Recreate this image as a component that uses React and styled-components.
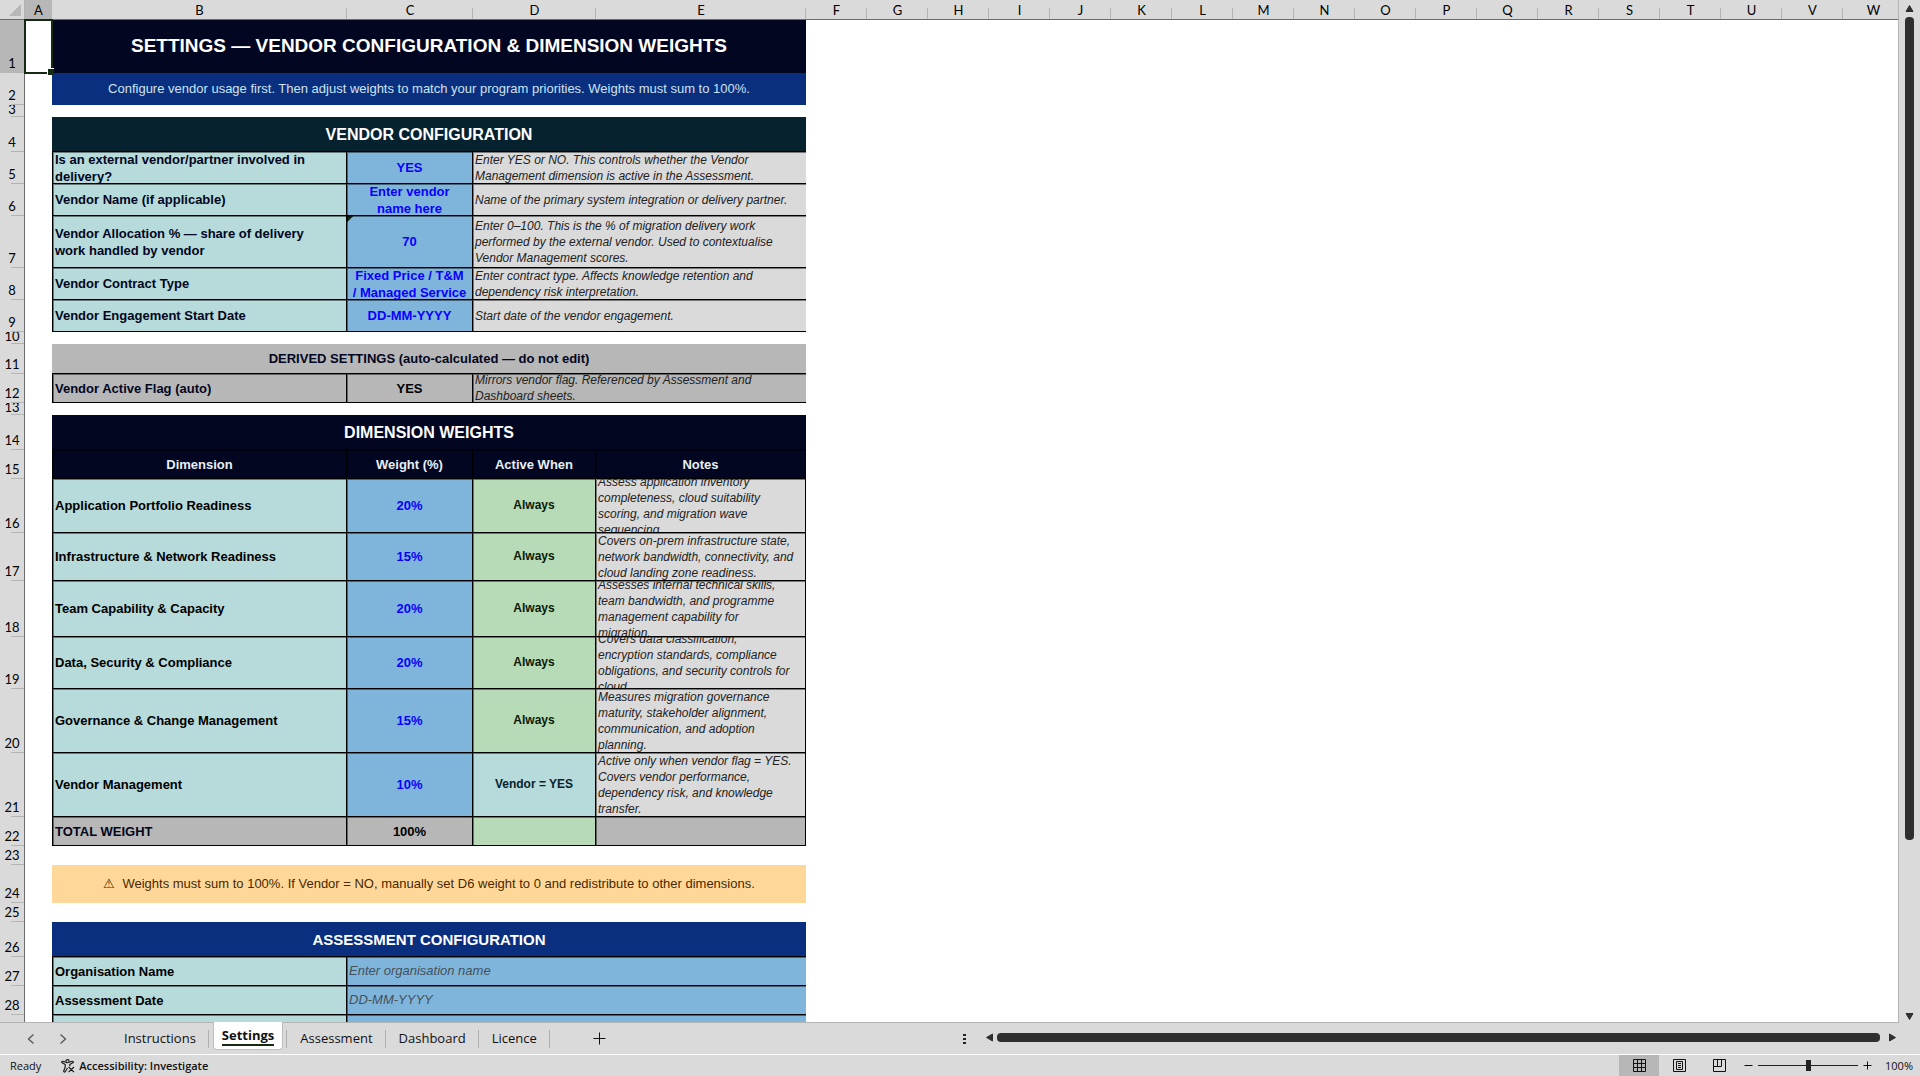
import React, { useState } from "react";
import styled, { createGlobalStyle, css } from "styled-components";

const GlobalStyle = createGlobalStyle`
  * { box-sizing: border-box; }
  html, body, #root { height: 100%; margin: 0; }
  body { overflow: hidden; background: #dadada; }
  button { border: 0; padding: 0; background: none; color: inherit; font: inherit; cursor: pointer; }
`;

const color = {
  chrome: "#dadada",
  chromeActive: "#b7b7b7",
  tick: "#b4b4b4",
  rule: "#6c6c6c",
  navy: "#020621",
  blue: "#092f7e",
  teal: "#06222f",
  mint: "#b7dada",
  input: "#7fb5da",
  note: "#dadada",
  gray: "#b7b7b7",
  green: "#b7dab7",
  amber: "#ffd899",
  select: "#142b12",
};

const sheetFont = `"Liberation Sans", Arial, sans-serif`;
const headingFont = `Lato, "Open Sans", sans-serif`;
const chromeFont = `"Open Sans", "Noto Sans", sans-serif`;

/* ---------- page frame ---------- */

const Page = styled.div`
  display: flex;
  flex-direction: column;
  height: 100vh;
  background: ${color.chrome};
`;

const Workspace = styled.main`
  display: flex;
  flex: 1;
  min-height: 0;
`;

const SheetPane = styled.div`
  flex: 1;
  min-width: 0;
  overflow: hidden;
  background: #fff;
  border-right: 1px solid ${color.tick};
  border-bottom: 1px solid ${color.tick};
`;

/* ---------- grid ---------- */

const Grid = styled.table`
  table-layout: fixed;
  width: 1904px;
  border-collapse: separate;
  border-spacing: 0;
  font-family: ${sheetFont};
  td, th { padding: 0; }
`;

const Col = styled.col`
  width: ${(p) => p.$w}px;
`;

const ColumnHead = styled.th`
  height: 20px;
  font: 400 13px/16px ${headingFont};
  color: #000;
  vertical-align: middle;
  border-bottom: 1px solid ${color.rule};
  background: ${(p) =>
    p.$active
      ? color.chromeActive
      : `linear-gradient(${color.tick}, ${color.tick}) right bottom / 1px 11px no-repeat ${color.chrome}`};
`;

const CornerHead = styled.th`
  height: 20px;
  text-align: right;
  vertical-align: top;
  border-right: 1px solid ${color.tick};
  border-bottom: 1px solid ${color.rule};
  background: ${color.chrome};
  svg { display: block; margin: 4px 3px 0 auto; }
`;

const RowHead = styled.div`
  display: flex;
  align-items: flex-end;
  justify-content: center;
  height: ${(p) => p.$h}px;
  padding-bottom: ${(p) => (p.$h < 16 ? 3 : 5)}px;
  overflow: hidden;
  font: 400 13px/9px ${headingFont};
  color: #000;
  border-right: 1px solid ${color.rule};
  background: ${(p) =>
    `linear-gradient(${color.tick}, ${color.tick}) right bottom / 13px 1px no-repeat ${
      p.$active ? color.chromeActive : color.chrome
    }`};
`;

const Blank = styled.div`
  position: relative;
  height: ${(p) => p.$h}px;
`;

const Selection = styled.div`
  position: absolute;
  z-index: 2;
  inset: -1px;
  border: 2px solid ${color.select};
  &::after {
    content: "";
    position: absolute;
    right: -3px;
    bottom: -3px;
    width: 6px;
    height: 6px;
    background: ${color.select};
    border: solid #fff;
    border-width: 1px 0 0 1px;
  }
`;

const line = "1px solid #000";
const softEdge = "inset 1px 1px 0 rgba(0, 0, 0, 0.45)";

const Box = styled.div`
  display: flex;
  align-items: center;
  height: ${(p) => p.$h}px;
  overflow: hidden;
  padding: 0 2px;
  font-size: 13px;
  line-height: 17px;
  white-space: pre-line;
`;

const Banner = styled(Box)`
  justify-content: center;
  padding-bottom: ${(p) => (p.$ruled ? 0 : 2)}px;
  white-space: pre;
  font-weight: ${(p) => (p.$plain ? 400 : 700)};
  font-size: ${(p) => p.$size || 13}px;
  color: ${(p) => p.$fg || "#fff"};
  background: ${(p) => p.$bg};
  border-bottom: ${(p) => (p.$ruled ? line : "0")};
`;

const Label = styled(Box)`
  font-weight: 700;
  color: ${(p) => p.$fg || "#000"};
  background: ${(p) => p.$bg || color.mint};
  border: ${line};
  border-top: 0;
  box-shadow: ${softEdge};
`;

const Value = styled(Box)`
  justify-content: center;
  text-align: center;
  font-weight: 700;
  color: ${(p) => p.$fg || "#0a00ff"};
  border: ${line};
  border-width: 0 1px 1px 0;
  box-shadow: ${softEdge};
  background: ${(p) => p.$bg || color.input};
  ${(p) =>
    p.$flagged &&
    css`
      background: linear-gradient(135deg, #10240f 4px, transparent 5px) ${color.input};
    `}
`;

const State = styled(Value)`
  font-size: 12px;
`;

const Note = styled(Box)`
  font-size: 12px;
  font-style: italic;
  line-height: 16px;
  color: #222;
  background: ${(p) => p.$bg || color.note};
  border: ${line};
  border-width: 0 ${(p) => (p.$open ? 0 : 1)}px 1px 0;
  box-shadow: ${softEdge};
`;

const Entry = styled(Note)`
  font-size: 13px;
  color: #44505a;
  background: ${color.input};
`;

const HeadCell = styled(Value)`
  color: #e8eef4;
  background: ${color.navy};
  border-left: ${(p) => (p.$first ? line : "0")};
`;

/* ---------- scroll bars ---------- */

const VScroll = styled.div`
  display: flex;
  flex-direction: column;
  align-items: center;
  width: 21px;
  padding: 4px 0 2px;
  gap: 4px;
`;

const Arrow = styled.button`
  display: flex;
  flex: none;
  align-items: center;
  justify-content: center;
  width: 9px;
  height: 9px;
`;

const VTrack = styled.div`
  flex: 1;
  width: 9px;
`;

const VThumb = styled.div`
  height: 83%;
  border-radius: 4px;
  background: #2f2f2f;
`;

const HScroll = styled.div`
  display: flex;
  align-items: center;
  width: 50%;
  padding: 0 23px 2px 3px;
`;

const Grip = styled.button`
  width: 3px;
  height: 10px;
  margin: 2px 19px 0 0;
  svg { display: block; }
`;

const HThumb = styled.div`
  flex: 1;
  height: 9px;
  margin: 0 8px 0 3px;
  border-radius: 4px;
  background: #2f2f2f;
`;

/* ---------- sheet tabs ---------- */

const TabBar = styled.div`
  display: flex;
  height: 32px;
  border-bottom: 1px solid #fff;
`;

const TabSide = styled.div`
  display: flex;
  align-items: center;
  width: 50%;
`;

const TabNav = styled.div`
  display: flex;
  padding: 0 32px 0 15px;
`;

const IconButton = styled.button`
  display: flex;
  align-items: center;
  justify-content: center;
  width: 32px;
  height: 30px;
`;

const TabList = styled.div`
  display: flex;
  align-self: stretch;
`;

const TabSlot = styled.div`
  display: flex;
  align-items: flex-start;
  padding: 0 ${(p) => (p.$on ? 4 : 0)}px;
  background: linear-gradient(#b0b0b0, #b0b0b0) right 7px / 1px 18px no-repeat;
`;

const Tab = styled.button`
  height: 31px;
  padding: 0 13px;
  font: 400 13px/31px ${chromeFont};
  color: #111;
  ${(p) =>
    p.$on &&
    css`
      height: 28px;
      margin-top: -1px;
      padding: 0 8px;
      font-weight: 700;
      line-height: 18px;
      background: #fff;
      border: 1px solid #bdbdbd;
      border-top: 0;
      border-radius: 0 0 4px 4px;
      span {
        display: block;
        border-bottom: 2px solid ${color.select};
      }
    `}
`;

const AddTab = styled(IconButton)`
  margin-left: 34px;
`;

/* ---------- status bar ---------- */

const StatusBar = styled.footer`
  display: flex;
  align-items: center;
  justify-content: space-between;
  height: 21px;
  font: 400 11px/20px ${chromeFont};
  color: #111;
`;

const StatusGroup = styled.div`
  display: flex;
  align-items: center;
  height: 21px;
`;

const Ready = styled.span`
  padding: 0 20px 0 10px;
`;

const Access = styled.button`
  display: flex;
  align-items: center;
  gap: 4px;
  font-weight: 600;
`;

const ViewButton = styled.button`
  display: flex;
  align-items: center;
  justify-content: center;
  width: 40px;
  height: 21px;
  padding-bottom: 1px;
  background: ${(p) => (p.$on ? color.chromeActive : "transparent")};
`;

const ZoomStep = styled.button`
  display: flex;
  width: 9px;
  margin: 0 5px;
`;

const ZoomRange = styled.input`
  appearance: none;
  width: 100px;
  height: 11px;
  margin: 0;
  background: linear-gradient(#222, #222) center / 100% 1px no-repeat;
  &::-webkit-slider-thumb {
    appearance: none;
    width: 5px;
    height: 11px;
    background: #222;
  }
`;

const ZoomValue = styled.span`
  width: 35px;
  margin-left: 8px;
`;

/* ---------- data ---------- */

const widths = [25, 27, 295, 126, 123, 210, ...Array(18).fill(61)];
const letters = "ABCDEFGHIJKLMNOPQRSTUVW".split("");

const banner = (h, text, props) => ({ h, kind: "banner", text, props });
const gap = (h) => ({ h, kind: "gap" });
const vendor = (h, label, value, note, props = {}) => ({ h, kind: "vendor", label, value, note, ...props });
const weight = (h, label, value, state, note, props = {}) => ({ h, kind: "weight", label, value, state, note, ...props });
const entry = (h, label, value) => ({ h, kind: "entry", label, value });

const rows = [
  banner(53, "SETTINGS — VENDOR CONFIGURATION & DIMENSION WEIGHTS", { $bg: color.navy, $size: 19 }),
  banner(32, "Configure vendor usage first. Then adjust weights to match your program priorities. Weights must sum to 100%.", {
    $bg: color.blue, $fg: "#cfe3f2", $plain: true,
  }),
  gap(12),
  banner(35, "VENDOR CONFIGURATION", { $bg: color.teal, $size: 16, $ruled: true }),
  vendor(32, "Is an external vendor/partner involved in delivery?", "YES", "Enter YES or NO. This controls whether the Vendor Management dimension is active in the Assessment."),
  vendor(32, "Vendor Name (if applicable)", "Enter vendor\nname here", "Name of the primary system integration or delivery partner."),
  vendor(52, "Vendor Allocation % — share of delivery\nwork handled by vendor", "70", "Enter 0–100. This is the % of migration delivery work performed by the external vendor. Used to contextualise Vendor Management scores.", { flagged: true }),
  vendor(32, "Vendor Contract Type", "Fixed Price / T&M\n/ Managed Service", "Enter contract type. Affects knowledge retention and dependency risk interpretation."),
  vendor(32, "Vendor Engagement Start Date", "DD-MM-YYYY", "Start date of the vendor engagement."),
  gap(12),
  banner(30, "DERIVED SETTINGS (auto-calculated — do not edit)", { $bg: color.gray, $fg: color.navy, $ruled: true }),
  vendor(29, "Vendor Active Flag (auto)", "YES", "Mirrors vendor flag. Referenced by Assessment and Dashboard sheets.", { bg: color.gray, fg: "#000" }),
  gap(12),
  banner(35, "DIMENSION WEIGHTS", { $bg: color.navy, $size: 16, $ruled: true }),
  { h: 29, kind: "head", cells: ["Dimension", "Weight (%)", "Active When", "Notes"] },
  weight(54, "Application Portfolio Readiness", "20%", "Always", "Assess application inventory\ncompleteness, cloud suitability\nscoring, and migration wave\nsequencing."),
  weight(48, "Infrastructure & Network Readiness", "15%", "Always", "Covers on-prem infrastructure state,\nnetwork bandwidth, connectivity, and\ncloud landing zone readiness."),
  weight(56, "Team Capability & Capacity", "20%", "Always", "Assesses internal technical skills,\nteam bandwidth, and programme\nmanagement capability for\nmigration."),
  weight(52, "Data, Security & Compliance", "20%", "Always", "Covers data classification,\nencryption standards, compliance\nobligations, and security controls for\ncloud."),
  weight(64, "Governance & Change Management", "15%", "Always", "Measures migration governance\nmaturity, stakeholder alignment,\ncommunication, and adoption\nplanning."),
  weight(64, "Vendor Management", "10%", "Vendor = YES", "Active only when vendor flag = YES.\nCovers vendor performance,\ndependency risk, and knowledge\ntransfer.", { stateBg: color.mint, stateFg: "#06222f" }),
  weight(29, "TOTAL WEIGHT", "100%", "", "", { bg: color.gray, labelFg: color.navy, fg: "#000" }),
  gap(19),
  banner(38, "⚠  Weights must sum to 100%. If Vendor = NO, manually set D6 weight to 0 and redistribute to other dimensions.", {
    $bg: color.amber, $fg: "#4a2800", $plain: true,
  }),
  gap(19),
  banner(35, "ASSESSMENT CONFIGURATION", { $bg: color.blue, $size: 15, $ruled: true }),
  entry(29, "Organisation Name", "Enter organisation name"),
  entry(29, "Assessment Date", "DD-MM-YYYY"),
  entry(29, "", ""),
];

function RowCells({ row }) {
  const { h } = row;
  switch (row.kind) {
    case "banner":
      return <td colSpan={4}><Banner $h={h} {...row.props}>{row.text}</Banner></td>;
    case "vendor":
      return (
        <>
          <td><Label $h={h} $bg={row.bg} $fg={color.navy}>{row.label}</Label></td>
          <td><Value $h={h} $bg={row.bg} $fg={row.fg} $flagged={row.flagged}>{row.value}</Value></td>
          <td colSpan={2}><Note $h={h} $bg={row.bg} $open>{row.note}</Note></td>
        </>
      );
    case "weight":
      return (
        <>
          <td><Label $h={h} $bg={row.bg} $fg={row.labelFg}>{row.label}</Label></td>
          <td><Value $h={h} $bg={row.bg} $fg={row.fg}>{row.value}</Value></td>
          <td><State $h={h} $bg={row.stateBg || color.green} $fg={row.stateFg || "#0b1a06"}>{row.state}</State></td>
          <td><Note $h={h} $bg={row.bg}>{row.note}</Note></td>
        </>
      );
    case "head":
      return row.cells.map((c, i) => <td key={c}><HeadCell $h={h} $first={i === 0}>{c}</HeadCell></td>);
    case "entry":
      return (
        <>
          <td><Label $h={h}>{row.label}</Label></td>
          <td colSpan={3}><Entry $h={h} $open>{row.value}</Entry></td>
        </>
      );
    default:
      return <td colSpan={4} />;
  }
}

const Triangle = ({ d }) => (
  <svg width="9" height="9" viewBox="0 0 9 9">
    <path d={d} fill="#2f2f2f" stroke="#2f2f2f" strokeWidth="1" strokeLinejoin="round" />
  </svg>
);

const Stroke = ({ size = 13, d, w = 1 }) => (
  <svg width={size} height={size} viewBox={`0 0 ${size} ${size}`} fill="none" stroke="#111" strokeWidth={w}>
    <path d={d} />
  </svg>
);

const tabs = ["Instructions", "Settings", "Assessment", "Dashboard", "Licence"];

export default function App() {
  const [active, setActive] = useState("Settings");
  const [zoom, setZoom] = useState(100);

  return (
    <Page>
      <GlobalStyle />
      <Workspace>
        <SheetPane>
          <Grid>
            <colgroup>{widths.map((w, i) => <Col key={i} $w={w} />)}</colgroup>
            <thead>
              <tr>
                <CornerHead>
                  <svg width="12" height="12"><path d="M12 0V12H0Z" fill="#b7b7b7" /></svg>
                </CornerHead>
                {letters.map((l) => <ColumnHead key={l} $active={l === "A"}>{l}</ColumnHead>)}
              </tr>
            </thead>
            <tbody>
              {rows.map((row, i) => (
                <tr key={i}>
                  <th><RowHead $h={row.h} $active={i === 0}>{i < 28 ? i + 1 : ""}</RowHead></th>
                  <td><Blank $h={row.h}>{i === 0 && <Selection />}</Blank></td>
                  <RowCells row={row} />
                  <td colSpan={18} />
                </tr>
              ))}
            </tbody>
          </Grid>
        </SheetPane>
        <VScroll>
          <Arrow aria-label="Scroll up"><Triangle d="M4.5 1.5L8 7.5H1Z" /></Arrow>
          <VTrack><VThumb /></VTrack>
          <Arrow aria-label="Scroll down"><Triangle d="M4.5 7.5L8 1.5H1Z" /></Arrow>
        </VScroll>
      </Workspace>

      <TabBar>
        <TabSide>
          <TabNav>
            <IconButton aria-label="Previous sheet">
              <svg width="10" height="10" fill="none" stroke="#555" strokeWidth="1.3"><path d="M7.5 .5L2.5 5L7.5 9.5" /></svg>
            </IconButton>
            <IconButton aria-label="Next sheet">
              <svg width="10" height="10" fill="none" stroke="#555" strokeWidth="1.3"><path d="M2.5 .5L7.5 5L2.5 9.5" /></svg>
            </IconButton>
          </TabNav>
          <TabList role="tablist">
            {tabs.map((t) => (
              <TabSlot key={t} $on={t === active}>
                <Tab role="tab" aria-selected={t === active} $on={t === active} onClick={() => setActive(t)}>
                  <span>{t}</span>
                </Tab>
              </TabSlot>
            ))}
          </TabList>
          <AddTab aria-label="New sheet"><Stroke d="M6.5 .5V12.5M.5 6.5H12.5" /></AddTab>
        </TabSide>
        <HScroll>
          <Grip aria-label="Resize tab area">
            <svg width="3" height="10" fill="#222"><path d="M0 0h3v2h-3zM0 4h3v2h-3zM0 8h3v2h-3z" /></svg>
          </Grip>
          <Arrow aria-label="Scroll left"><Triangle d="M1.5 4.5L7.5 1V8Z" /></Arrow>
          <HThumb />
          <Arrow aria-label="Scroll right"><Triangle d="M7.5 4.5L1.5 1V8Z" /></Arrow>
        </HScroll>
      </TabBar>

      <StatusBar>
        <StatusGroup>
          <Ready>Ready</Ready>
          <Access>
            <svg width="14" height="14" viewBox="0 0 14 14" fill="none" stroke="#111" strokeWidth="1.1" strokeLinejoin="round">
              <circle cx="6.5" cy="2.2" r="1.6" />
              <path d="M4.8 3.2L1.8 2.2Q.3 2.2 .8 3.6L4.2 5.4V8L2.6 12.2Q3 13.6 4.2 12.8L6.5 9M8.2 3.2L11.2 2.2Q12.7 2.2 12.2 3.6L8.8 5.4V7.2M7.6 8L13 13.2M13 8L7.6 13.2" />
            </svg>
            Accessibility: Investigate
          </Access>
        </StatusGroup>
        <StatusGroup>
          <ViewButton $on aria-label="Normal view"><Stroke d="M.5 .5H12.5V12.5H.5ZM4.5 .5V12.5M8.5 .5V12.5M.5 4.5H12.5M.5 8.5H12.5" /></ViewButton>
          <ViewButton aria-label="Page layout view"><Stroke d="M.5 .5H12.5V12.5H.5ZM3.5 2.5H9.5V10.5H3.5ZM5 4.5H8M5 6.5H8M5 8.5H8" /></ViewButton>
          <ViewButton aria-label="Page break preview"><Stroke d="M.5 .5H12.5V12.5H.5ZM.5 7.5H8.5V.5M4.5 .5V7.5" /></ViewButton>
          <ZoomStep aria-label="Zoom out" onClick={() => setZoom(zoom - 10)}><Stroke size={9} d="M.5 4.5H8.5" /></ZoomStep>
          <ZoomRange type="range" aria-label="Zoom" min="0" max="200" value={zoom} onChange={(e) => setZoom(Number(e.target.value))} />
          <ZoomStep aria-label="Zoom in" onClick={() => setZoom(zoom + 10)}><Stroke size={9} d="M4.5 .5V8.5M.5 4.5H8.5" /></ZoomStep>
          <ZoomValue>{zoom}%</ZoomValue>
        </StatusGroup>
      </StatusBar>
    </Page>
  );
}
